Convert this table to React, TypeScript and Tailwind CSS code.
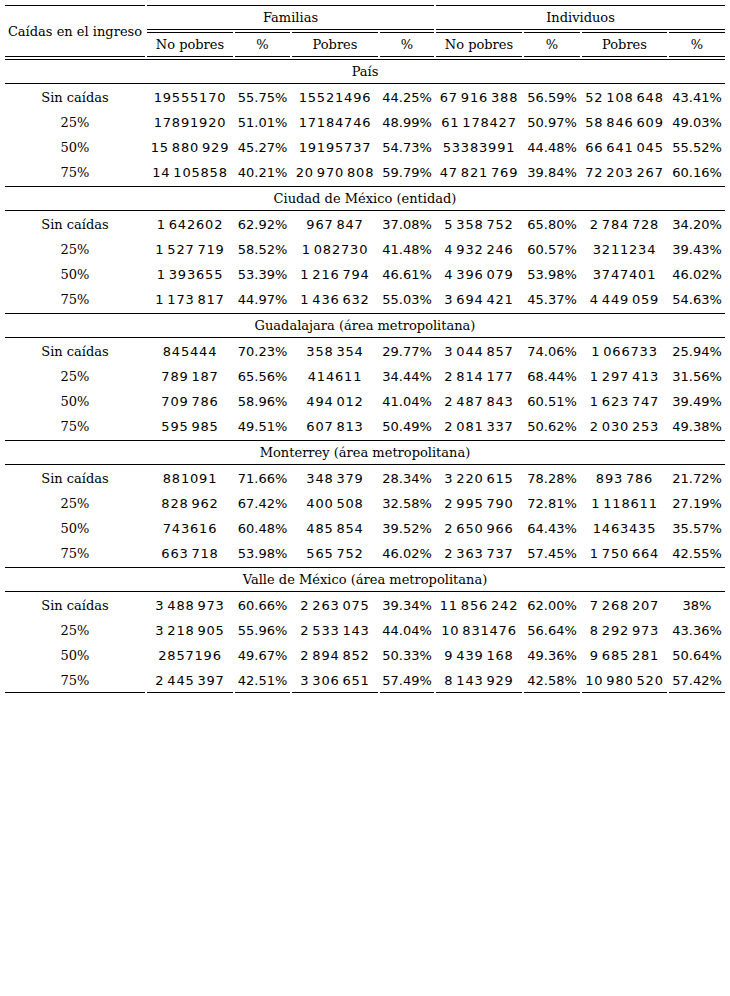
import { Fragment } from "react";

type Section = {
  title: string;
  rows: string[][];
};

const sections: Section[] = [
  {
    title: "País",
    rows: [
      ["Sin caídas", "19555170", "55.75%", "15521496", "44.25%", "67 916 388", "56.59%", "52 108 648", "43.41%"],
      ["25%", "17891920", "51.01%", "17184746", "48.99%", "61 178427", "50.97%", "58 846 609", "49.03%"],
      ["50%", "15 880 929", "45.27%", "19195737", "54.73%", "53383991", "44.48%", "66 641 045", "55.52%"],
      ["75%", "14 105858", "40.21%", "20 970 808", "59.79%", "47 821 769", "39.84%", "72 203 267", "60.16%"],
    ],
  },
  {
    title: "Ciudad de México (entidad)",
    rows: [
      ["Sin caídas", "1 642602", "62.92%", "967 847", "37.08%", "5 358 752", "65.80%", "2 784 728", "34.20%"],
      ["25%", "1 527 719", "58.52%", "1 082730", "41.48%", "4 932 246", "60.57%", "3211234", "39.43%"],
      ["50%", "1 393655", "53.39%", "1 216 794", "46.61%", "4 396 079", "53.98%", "3747401", "46.02%"],
      ["75%", "1 173 817", "44.97%", "1 436 632", "55.03%", "3 694 421", "45.37%", "4 449 059", "54.63%"],
    ],
  },
  {
    title: "Guadalajara (área metropolitana)",
    rows: [
      ["Sin caídas", "845444", "70.23%", "358 354", "29.77%", "3 044 857", "74.06%", "1 066733", "25.94%"],
      ["25%", "789 187", "65.56%", "414611", "34.44%", "2 814 177", "68.44%", "1 297 413", "31.56%"],
      ["50%", "709 786", "58.96%", "494 012", "41.04%", "2 487 843", "60.51%", "1 623 747", "39.49%"],
      ["75%", "595 985", "49.51%", "607 813", "50.49%", "2 081 337", "50.62%", "2 030 253", "49.38%"],
    ],
  },
  {
    title: "Monterrey (área metropolitana)",
    rows: [
      ["Sin caídas", "881091", "71.66%", "348 379", "28.34%", "3 220 615", "78.28%", "893 786", "21.72%"],
      ["25%", "828 962", "67.42%", "400 508", "32.58%", "2 995 790", "72.81%", "1 118611", "27.19%"],
      ["50%", "743616", "60.48%", "485 854", "39.52%", "2 650 966", "64.43%", "1463435", "35.57%"],
      ["75%", "663 718", "53.98%", "565 752", "46.02%", "2 363 737", "57.45%", "1 750 664", "42.55%"],
    ],
  },
  {
    title: "Valle de México (área metropolitana)",
    rows: [
      ["Sin caídas", "3 488 973", "60.66%", "2 263 075", "39.34%", "11 856 242", "62.00%", "7 268 207", "38%"],
      ["25%", "3 218 905", "55.96%", "2 533 143", "44.04%", "10 831476", "56.64%", "8 292 973", "43.36%"],
      ["50%", "2857196", "49.67%", "2 894 852", "50.33%", "9 439 168", "49.36%", "9 685 281", "50.64%"],
      ["75%", "2 445 397", "42.51%", "3 306 651", "57.49%", "8 143 929", "42.58%", "10 980 520", "57.42%"],
    ],
  },
];

const subHeaders = ["No pobres", "%", "Pobres", "%", "No pobres", "%", "Pobres", "%"];

const lined = "border-y border-black p-0 text-center font-normal leading-[23px]";

// count columns are set a little looser, percent columns stay plain
function cellFont(ci: number) {
  if (ci === 0) return "";
  if (ci % 2 === 1) return "font-['DejaVu_Sans',sans-serif] tracking-[0.8px] [word-spacing:-2px]";
  return "font-['DejaVu_Sans',sans-serif]";
}

export default function App() {
  return (
    <div className="min-h-[996px] w-[730px] bg-white pt-[3px] pl-[3px] text-[13px] text-black font-['DejaVu_Serif',serif]">
      <table className="w-[724px] table-fixed border-separate border-spacing-[2px]">
        <colgroup>
          <col className="w-[140px]" />
          <col className="w-[86px]" />
          <col className="w-[55px]" />
          <col className="w-[86px]" />
          <col className="w-[54px]" />
          <col className="w-[86px]" />
          <col className="w-[56px]" />
          <col className="w-[85px]" />
          <col className="w-[56px]" />
        </colgroup>
        <thead>
          <tr>
            <th rowSpan={2} className={`${lined} whitespace-nowrap`}>
              Caídas en el ingreso
            </th>
            <th colSpan={4} className={lined}>
              Familias
            </th>
            <th colSpan={4} className={lined}>
              Individuos
            </th>
          </tr>
          <tr>
            {subHeaders.map((h, i) => (
              <th key={i} className={lined}>
                {h}
              </th>
            ))}
          </tr>
        </thead>
        <tbody>
          {sections.map((section, si) => (
            <Fragment key={section.title}>
              <tr>
                <td colSpan={9} className={lined}>
                  {section.title}
                </td>
              </tr>
              {section.rows.map((row, ri) => {
                const last = si === sections.length - 1 && ri === section.rows.length - 1;
                return (
                  <tr key={ri}>
                    {row.map((cell, ci) => (
                      <td
                        key={ci}
                        className={`p-0 text-center leading-[23px] whitespace-nowrap ${
                          last ? "border-b border-black" : ""
                        } ${cellFont(ci)}`}
                      >
                        {cell}
                      </td>
                    ))}
                  </tr>
                );
              })}
            </Fragment>
          ))}
        </tbody>
      </table>
    </div>
  );
}
